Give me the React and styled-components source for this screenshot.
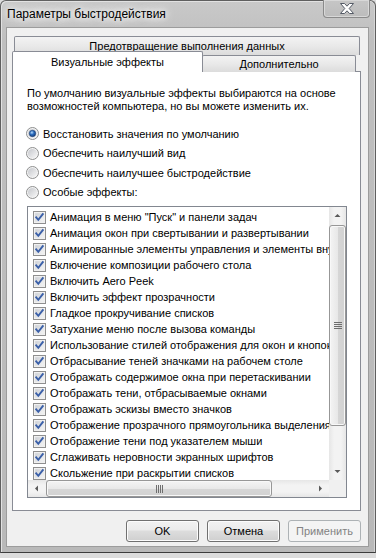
import React from "react";
import styled, { createGlobalStyle } from "styled-components";

const Global = createGlobalStyle`
  html, body { margin: 0; padding: 0; }
  body {
    width: 376px; height: 558px; overflow: hidden;
    background: #dcdcdc;
    font-family: "Liberation Sans", Arial, sans-serif;
    color: #000;
  }
  * { box-sizing: border-box; }
`;

const Window = styled.div`
  width: 376px;
  height: 553px;
  border: 1px solid #5f5f5f;
  border-bottom-color: #3c3c3c;
  border-radius: 6px 6px 0 0;
  background: linear-gradient(to bottom, #c9c9c9 0px, #bfbfbf 40px, #b9b9b9 100%);
  box-shadow: inset 1px 1px 0 #e2e2e2, inset -1px 0 0 #d6d6d6;
  display: flex;
  flex-direction: column;
  padding: 0 6px 5px 5px;
`;

const TitleBar = styled.div`
  height: 26px;
  display: flex;
  align-items: flex-start;
`;

const Title = styled.div`
  padding: 6px 0 0 1px;
  font-size: 12px;
  line-height: 14px;
  text-shadow: 0 0 6px #fff, 0 0 10px #fff, 0 0 14px rgba(255,255,255,0.9);
`;

const CloseButton = styled.div`
  margin-left: auto;
  margin-right: -1px;
  margin-top: -1px;
  width: 47px;
  height: 18px;
  border: 1px solid #8a8a8a;
  border-top: none;
  border-radius: 0 0 4px 4px;
  background: linear-gradient(to bottom, #c6c6c6, #bcbcbc);
  box-shadow: inset 0 0 0 1px #d8d8d8;
  display: flex;
  align-items: center;
  justify-content: center;
`;

const Client = styled.div`
  flex: 1;
  background: #f0f0f0;
  border: 1px solid #9c9c9c;
  padding: 8px 7px 0 5px;
  display: flex;
  flex-direction: column;
`;

const BackRow = styled.div`
  display: flex;
  height: 19px;
  padding: 0 1px 0 2px;
`;

const TabBase = styled.div`
  border: 1px solid #898c95;
  border-bottom: none;
  border-radius: 2px 2px 0 0;
  font-size: 11px;
  text-align: center;
  white-space: nowrap;
`;

const BackTab = styled(TabBase)`
  flex: 1;
  background: linear-gradient(to bottom, #f3f3f3, #e9e9e9 50%, #dcdcdc);
  line-height: 16px;
  padding-top: 1px;
`;

const FrontRow = styled.div`
  display: flex;
  align-items: flex-end;
  height: 21px;
  margin-top: -4px;
  padding-right: 3px;
`;

const Tab = styled(TabBase)`
  position: relative;
  width: ${(p) => p.$w}px;
  height: ${(p) => (p.$active ? 21 : 17)}px;
  z-index: ${(p) => (p.$active ? 2 : 1)};
  margin-left: ${(p) => (p.$active ? 0 : -1)}px;
  background: ${(p) =>
    p.$active ? "#fff" : "linear-gradient(to bottom, #f3f3f3, #e9e9e9 50%, #dcdcdc)"};
  line-height: ${(p) => (p.$active ? 19 : 16)}px;
  padding-top: ${(p) => (p.$active ? 1 : 0)}px;
`;

const Panel = styled.div`
  margin-top: -1px;
  height: 440px;
  border: 1px solid #898c95;
  background: #fff;
  padding: 15px 12px 0 13px;
  display: flex;
  flex-direction: column;
`;

const Description = styled.p`
  margin: 0 0 0 1px;
  font-size: 11px;
  line-height: 13px;
  white-space: nowrap;
`;

const RadioGroup = styled.div`
  margin-top: 11px;
  display: flex;
  flex-direction: column;
`;

const RadioRow = styled.label`
  height: 19.5px;
  display: flex;
  align-items: center;
  gap: 4px;
  font-size: 11px;
`;

const ListBox = styled.div`
  margin: 4px 0 0 1px;
  width: 320px;
  height: 292px;
  border: 1px solid #828790;
  display: grid;
  grid-template-columns: 1fr 17px;
  grid-template-rows: 1fr 17px;
  background: #fff;
`;

const Items = styled.div`
  overflow: hidden;
  padding: 2px 0 0 5px;
`;

const Item = styled.div`
  height: 16px;
  display: flex;
  align-items: center;
  gap: 4px;
  font-size: 11px;
  white-space: nowrap;
`;

const VScroll = styled.div`
  display: flex;
  flex-direction: column;
  background: linear-gradient(to right, #e6e6e6, #f3f3f3 30%, #f3f3f3 70%, #e6e6e6);
`;

const HScroll = styled.div`
  display: flex;
  background: linear-gradient(to bottom, #e6e6e6, #f3f3f3 30%, #f3f3f3 70%, #e6e6e6);
`;

const ArrowBtn = styled.div`
  flex: none;
  width: 17px;
  height: 17px;
  display: flex;
  align-items: center;
  justify-content: center;
`;

const Track = styled.div`
  flex: 1;
  display: flex;
  flex-direction: ${(p) => (p.$vertical ? "column" : "row")};
  padding: ${(p) => (p.$vertical ? "1px 0 0 0" : "0 0 0 1px")};
`;

const Thumb = styled.div`
  flex: none;
  width: ${(p) => (p.$vertical ? "100%" : `${p.$size}px`)};
  height: ${(p) => (p.$vertical ? `${p.$size}px` : "100%")};
  border: 1px solid #979797;
  border-radius: 3px;
  background: ${(p) =>
    p.$vertical
      ? "linear-gradient(to right, #f4f4f4, #e8e8e8 50%, #d6d6d6 51%, #d2d2d2)"
      : "linear-gradient(to bottom, #f4f4f4, #e8e8e8 50%, #d6d6d6 51%, #d2d2d2)"};
  box-shadow: inset 0 0 0 1px #f8f8f8;
  display: flex;
  align-items: center;
  justify-content: center;
`;

const Corner = styled.div`
  background: #f0f0f0;
`;

const ButtonRow = styled.div`
  display: flex;
  justify-content: flex-end;
  gap: 8px;
  margin-top: 9px;
`;

const Button = styled.div`
  width: 73px;
  height: 22px;
  border: 1px solid ${(p) => (p.$disabled ? "#adb2b5" : "#707070")};
  border-radius: 3px;
  background: ${(p) =>
    p.$disabled
      ? "#f4f4f4"
      : "linear-gradient(to bottom, #f2f2f2, #ebebeb 45%, #dddddd 50%, #cfcfcf)"};
  box-shadow: inset 0 0 0 1px ${(p) => (p.$disabled ? "#f4f4f4" : "#fcfcfc")};
  color: ${(p) => (p.$disabled ? "#838383" : "#000")};
  font-size: 11px;
  display: flex;
  align-items: center;
  justify-content: center;
`;

const CloseGlyph = () => (
  <svg width="16" height="11" viewBox="0 0 16 11">
    <path
      d="M1.5 0.5 H5.5 L8 3.2 L10.5 0.5 H14.5 L10.2 5.5 L14.5 10.5 H10.5 L8 7.8 L5.5 10.5 H1.5 L5.8 5.5 Z"
      fill="#ffffff"
      stroke="#555b66"
      strokeWidth="1"
      strokeLinejoin="round"
    />
  </svg>
);

const CheckIcon = () => (
  <svg width="13" height="13" viewBox="0 0 13 13" style={{ flex: "none" }}>
    <defs>
      <linearGradient id="cbg" x1="0" y1="0" x2="1" y2="1">
        <stop offset="0" stopColor="#cbcfd5" />
        <stop offset="1" stopColor="#f6f6f6" />
      </linearGradient>
    </defs>
    <rect x="0.5" y="0.5" width="12" height="12" fill="#f4f4f4" stroke="#8f8f8f" />
    <rect x="2" y="2" width="9" height="9" fill="url(#cbg)" stroke="#e8e8e8" strokeWidth="0.6" />
    <path d="M3.2 6.4 L5.3 8.8 L9.8 3.2" fill="none" stroke="#3a5fa8" strokeWidth="1.9" strokeLinecap="square" />
  </svg>
);

const RadioIcon = ({ on }) => (
  <svg width="13" height="13" viewBox="0 0 13 13" style={{ flex: "none" }}>
    <defs>
      <linearGradient id="rbg" x1="0" y1="0" x2="1" y2="1">
        <stop offset="0" stopColor="#c4c6cb" />
        <stop offset="1" stopColor="#f8f8f8" />
      </linearGradient>
      <radialGradient id="rdot" cx="0.4" cy="0.35" r="0.7">
        <stop offset="0" stopColor="#b9dcfb" />
        <stop offset="0.45" stopColor="#2c6ec0" />
        <stop offset="1" stopColor="#153a76" />
      </radialGradient>
    </defs>
    <circle cx="6.5" cy="6.5" r="6" fill="#f4f4f4" stroke="#8e8f8f" />
    <circle cx="6.5" cy="6.5" r="4.6" fill="url(#rbg)" />
    {on && <circle cx="6.5" cy="6.5" r="3.2" fill="url(#rdot)" stroke="#1d3f74" strokeWidth="0.6" />}
  </svg>
);

const Arrow = ({ dir }) => {
  const paths = {
    up: "M0.5 4 L3.5 1 L6.5 4 Z",
    down: "M0.5 1 L3.5 4 L6.5 1 Z",
    left: "M4 0.5 L1 3.5 L4 6.5 Z",
    right: "M1 0.5 L4 3.5 L1 6.5 Z",
  };
  const vert = dir === "up" || dir === "down";
  return (
    <svg width={vert ? 7 : 5} height={vert ? 5 : 7} viewBox={vert ? "0 0 7 5" : "0 0 5 7"}>
      <path d={paths[dir]} fill="#5a5a5a" />
    </svg>
  );
};

const Grip = ({ vertical }) =>
  vertical ? (
    <svg width="8" height="7" viewBox="0 0 8 7">
      {[0.5, 2.5, 4.5, 6.5].map((y) => (
        <line key={y} x1="0" y1={y} x2="8" y2={y} stroke="#6e6e6e" strokeWidth="1" />
      ))}
    </svg>
  ) : (
    <svg width="7" height="8" viewBox="0 0 7 8">
      {[0.5, 2.5, 4.5, 6.5].map((x) => (
        <line key={x} x1={x} y1="0" x2={x} y2="8" stroke="#6e6e6e" strokeWidth="1" />
      ))}
    </svg>
  );

const radios = [
  { label: "Восстановить значения по умолчанию", on: true },
  { label: "Обеспечить наилучший вид" },
  { label: "Обеспечить наилучшее быстродействие" },
  { label: "Особые эффекты:" },
];

const effects = [
  "Анимация в меню \"Пуск\" и панели задач",
  "Анимация окон при свертывании и развертывании",
  "Анимированные элементы управления и элементы внутри окна",
  "Включение композиции рабочего стола",
  "Включить Aero Peek",
  "Включить эффект прозрачности",
  "Гладкое прокручивание списков",
  "Затухание меню после вызова команды",
  "Использование стилей отображения для окон и кнопок",
  "Отбрасывание теней значками на рабочем столе",
  "Отображать содержимое окна при перетаскивании",
  "Отображать тени, отбрасываемые окнами",
  "Отображать эскизы вместо значков",
  "Отображение прозрачного прямоугольника выделения",
  "Отображение тени под указателем мыши",
  "Сглаживать неровности экранных шрифтов",
  "Скольжение при раскрытии списков",
];

export default function App() {
  return (
    <>
      <Global />
      <Window>
        <TitleBar>
          <Title>Параметры быстродействия</Title>
          <CloseButton>
            <CloseGlyph />
          </CloseButton>
        </TitleBar>
        <Client>
          <BackRow>
            <BackTab>Предотвращение выполнения данных</BackTab>
          </BackRow>
          <FrontRow>
            <Tab $active $w={191}>Визуальные эффекты</Tab>
            <Tab $w={154}>Дополнительно</Tab>
          </FrontRow>
          <Panel>
            <Description>
              По умолчанию визуальные эффекты выбираются на основе
              <br />
              возможностей компьютера, но вы можете изменить их.
            </Description>
            <RadioGroup>
              {radios.map((r) => (
                <RadioRow key={r.label}>
                  <RadioIcon on={r.on} />
                  {r.label}
                </RadioRow>
              ))}
            </RadioGroup>
            <ListBox>
              <Items>
                {effects.map((e) => (
                  <Item key={e}>
                    <CheckIcon />
                    {e}
                  </Item>
                ))}
              </Items>
              <VScroll>
                <ArrowBtn><Arrow dir="up" /></ArrowBtn>
                <Track $vertical>
                  <Thumb $vertical $size={201}><Grip vertical /></Thumb>
                </Track>
                <ArrowBtn><Arrow dir="down" /></ArrowBtn>
              </VScroll>
              <HScroll>
                <ArrowBtn><Arrow dir="left" /></ArrowBtn>
                <Track>
                  <Thumb $size={226}><Grip /></Thumb>
                </Track>
                <ArrowBtn><Arrow dir="right" /></ArrowBtn>
              </HScroll>
              <Corner />
            </ListBox>
          </Panel>
          <ButtonRow>
            <Button>OK</Button>
            <Button>Отмена</Button>
            <Button $disabled>Применить</Button>
          </ButtonRow>
        </Client>
      </Window>
    </>
  );
}
